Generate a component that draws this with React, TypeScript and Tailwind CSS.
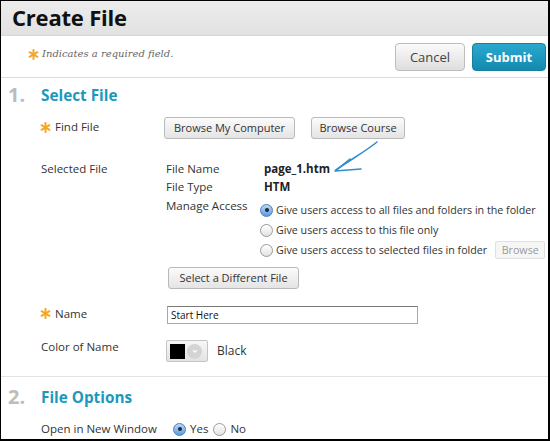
import React from 'react';

const font = { fontFamily: '"Open Sans", "DejaVu Sans", sans-serif' };

function Star({ className = '' }: { className?: string }) {
  return (
    <svg viewBox="0 0 12 12" className={`w-[11px] h-[11px] shrink-0 ${className}`}>
      <g stroke="#f5a623" strokeWidth="2.2" strokeLinecap="round">
        <line x1="6" y1="1" x2="6" y2="11" />
        <line x1="1.7" y1="3.5" x2="10.3" y2="8.5" />
        <line x1="1.7" y1="8.5" x2="10.3" y2="3.5" />
      </g>
    </svg>
  );
}

function Radio({ on = false }: { on?: boolean }) {
  return (
    <span
      className={`inline-flex items-center justify-center w-[13px] h-[13px] rounded-full border shrink-0 ${
        on
          ? 'border-[#4a7fb5] bg-gradient-to-b from-[#bcd8f4] to-[#5d9be0]'
          : 'border-[#9a9a9a] bg-gradient-to-b from-[#ffffff] to-[#e2e2e2]'
      }`}
    >
      {on && <span className="w-[4px] h-[4px] rounded-full bg-[#1b2a3a]" />}
    </span>
  );
}

function Btn({ children, className = '' }: { children: React.ReactNode; className?: string }) {
  return (
    <span
      className={`inline-flex items-center justify-center h-[22px] rounded-[3px] border border-[#b9b9b9] bg-gradient-to-b from-[#fbfbfb] to-[#e4e4e4] text-[11px] text-[#333] whitespace-nowrap ${className}`}
    >
      {children}
    </span>
  );
}

export default function App() {
  return (
    <div
      className="w-[550px] h-[441px] box-border overflow-hidden bg-white border-l border-t border-r-2 border-b-2 border-black text-[#333] text-[11.5px] leading-[18px]"
      style={font}
    >
      {/* title bar */}
      <div className="h-[35px] bg-gradient-to-b from-[#ececec] to-[#e2e2e2] border-b border-[#d6d6d6] flex items-center pl-[11px]">
        <h1 className="text-[22px] font-bold text-[#111] tracking-[-0.2px] leading-none -mt-[2px]">Create File</h1>
      </div>

      {/* required + actions */}
      <div className="h-[42px] flex items-center justify-between border-b border-[#dcdcdc] pl-[27px] pr-[2px]">
        <div className="flex items-center gap-[3px] -mt-[5px]">
          <Star />
          <span className="text-[10px] italic text-[#666]" style={{ fontFamily: '"DejaVu Serif", serif' }}>
            Indicates a required field.
          </span>
        </div>
        <div className="flex items-center gap-[7px]">
          <span className="inline-flex items-center justify-center w-[70px] h-[28px] rounded-[4px] border border-[#bdbdbd] bg-gradient-to-b from-[#fafafa] to-[#dedede] text-[13px] text-[#444]">
            Cancel
          </span>
          <span className="inline-flex items-center justify-center w-[74px] h-[28px] rounded-[4px] border border-[#16809f] bg-gradient-to-b from-[#2aa9cf] to-[#1489af] text-[13px] font-bold text-white">
            Submit
          </span>
        </div>
      </div>

      {/* section 1 */}
      <div className="relative border-b border-[#e3e3e3] pb-[14px]">
        <div className="flex items-center h-[34px]">
          <span className="w-[40px] pl-[7px] text-[20px] font-bold text-[#bcbcbc]">1.</span>
          <span className="text-[15.3px] font-bold text-[#1a99bd]">Select File</span>
        </div>

        <div className="pl-[40px]">
          {/* find file */}
          <div className="flex items-center mt-[5px]">
            <div className="w-[124px] flex items-center gap-[4px] -ml-[1px] -mt-[2px]">
              <Star className="w-[10px] h-[10px]" />
              <span>Find File</span>
            </div>
            <div className="flex gap-[16px]">
              <Btn className="w-[131px]">Browse My Computer</Btn>
              <Btn className="w-[94px]">Browse Course</Btn>
            </div>
          </div>

          {/* selected file */}
          <div className="flex mt-[21px]">
            <div className="w-[125px]">Selected File</div>
            <div>
              <div className="flex">
                <span className="w-[98px]">File Name</span>
                <span className="font-bold text-[#222]">page_1.htm</span>
              </div>
              <div className="flex">
                <span className="w-[98px]">File Type</span>
                <span className="font-bold text-[#222]">HTM</span>
              </div>
              <div className="flex mt-[1px]">
                <span className="w-[94px]">Manage Access</span>
                <div className="flex flex-col gap-[4px] pt-[5px] text-[10.7px]">
                  <div className="flex items-center gap-[3px] h-[16px] whitespace-nowrap">
                    <Radio on />
                    <span>Give users access to all files and folders in the folder</span>
                  </div>
                  <div className="flex items-center gap-[3px] h-[16px] whitespace-nowrap">
                    <Radio />
                    <span>Give users access to this file only</span>
                  </div>
                  <div className="flex items-center gap-[3px] h-[16px] whitespace-nowrap">
                    <Radio />
                    <span>Give users access to selected files in folder</span>
                    <span className="ml-[5px] inline-flex items-center justify-center w-[50px] h-[18px] border border-[#e0e0e0] bg-[#f6f6f6] text-[#9a9a9a] rounded-[2px]">
                      Browse
                    </span>
                  </div>
                </div>
              </div>
              <Btn className="w-[131px] mt-[9px] ml-[2px]">Select a Different File</Btn>
            </div>
          </div>

          {/* name */}
          <div className="flex items-center mt-[17px]">
            <div className="w-[127px] flex items-center gap-[4px] -ml-[1px] -mt-[3px]">
              <Star />
              <span>Name</span>
            </div>
            <div className="w-[251px] h-[18px] border border-[#a8a8a8] border-t-[#7a7a7a] flex items-center px-[3px] text-[10px] text-[#111]">
              Start Here
            </div>
          </div>

          {/* color */}
          <div className="flex items-center mt-[16px]">
            <div className="w-[125px] -mt-[8px]">Color of Name</div>
            <span className="inline-flex items-center gap-[2px] w-[42px] h-[22px] border border-[#c4c4c4] rounded-[2px] bg-gradient-to-b from-[#f7f7f7] to-[#e3e3e3] px-[3px]">
              <span className="w-[15px] h-[15px] bg-black" />
              <span className="w-[15px] h-[15px] rounded-full bg-[#d4d4d4] flex items-center justify-center">
                <svg viewBox="0 0 10 10" className="w-[8px] h-[8px]">
                  <path d="M2.5 4 L5 6.5 L7.5 4" fill="none" stroke="#fff" strokeWidth="1.4" />
                </svg>
              </span>
            </span>
            <span className="ml-[9px] text-[12px]">Black</span>
          </div>
        </div>

        {/* hand-drawn arrow */}
        <svg className="absolute left-[325px] top-[62px] w-[60px] h-[40px]" viewBox="0 0 60 40">
          <path d="M51 2 C40 11 24 20 10 30" fill="none" stroke="#2f8ec9" strokeWidth="1.6" strokeLinecap="round" />
          <path d="M24 19 L9 31 L35 29" fill="none" stroke="#2f8ec9" strokeWidth="1.6" strokeLinecap="round" strokeLinejoin="round" />
        </svg>
      </div>

      {/* section 2 */}
      <div>
        <div className="flex items-center h-[40px]">
          <span className="w-[40px] pl-[7px] text-[20px] font-bold text-[#bcbcbc]">2.</span>
          <span className="text-[15.3px] font-bold text-[#1a99bd]">File Options</span>
        </div>
        <div className="flex items-center pl-[40px] mt-[3px]">
          <span className="w-[132px]">Open in New Window</span>
          <span className="flex items-center gap-[4px]">
            <Radio on /> Yes <span className="ml-[1px] flex"><Radio /></span> No
          </span>
        </div>
      </div>
    </div>
  );
}
